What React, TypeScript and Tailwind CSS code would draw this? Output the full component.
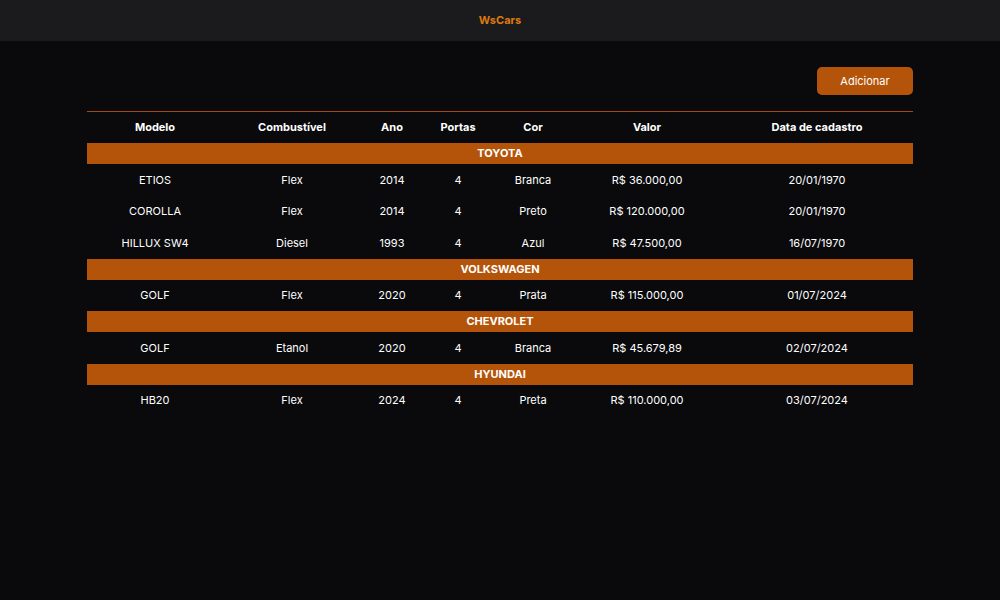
const cols = [
  { label: "Modelo", w: "w-[136px]" },
  { label: "Combustível", w: "w-[138px]" },
  { label: "Ano", w: "w-[62px]" },
  { label: "Portas", w: "w-[70px]" },
  { label: "Cor", w: "w-[80px]" },
  { label: "Valor", w: "w-[148px]" },
  { label: "Data de cadastro", w: "w-[192px]" },
];

type Car = { modelo: string; comb: string; ano: string; portas: string; cor: string; valor: string; data: string };

const brands: { nome: string; carros: Car[] }[] = [
  {
    nome: "TOYOTA",
    carros: [
      { modelo: "ETIOS", comb: "Flex", ano: "2014", portas: "4", cor: "Branca", valor: "R$ 36.000,00", data: "20/01/1970" },
      { modelo: "COROLLA", comb: "Flex", ano: "2014", portas: "4", cor: "Preto", valor: "R$ 120.000,00", data: "20/01/1970" },
      { modelo: "HILLUX SW4", comb: "Diesel", ano: "1993", portas: "4", cor: "Azul", valor: "R$ 47.500,00", data: "16/07/1970" },
    ],
  },
  {
    nome: "VOLKSWAGEN",
    carros: [
      { modelo: "GOLF", comb: "Flex", ano: "2020", portas: "4", cor: "Prata", valor: "R$ 115.000,00", data: "01/07/2024" },
    ],
  },
  {
    nome: "CHEVROLET",
    carros: [
      { modelo: "GOLF", comb: "Etanol", ano: "2020", portas: "4", cor: "Branca", valor: "R$ 45.679,89", data: "02/07/2024" },
    ],
  },
  {
    nome: "HYUNDAI",
    carros: [
      { modelo: "HB20", comb: "Flex", ano: "2024", portas: "4", cor: "Preta", valor: "R$ 110.000,00", data: "03/07/2024" },
    ],
  },
];

export default function App() {
  return (
    <div className="min-h-[600px] bg-[#0a0a0c] text-white font-['Inter',sans-serif]">
      {/* Header */}
      <header className="h-[41px] bg-[#1b1b1d] flex items-center justify-center">
        <span className="text-[#dc7a10] text-[11px] font-bold">WsCars</span>
      </header>

      <main className="w-[826px] mx-auto pt-[26px]">
        <div className="flex justify-end">
          <button className="w-[96px] h-[28px] rounded-[5px] bg-[#b4540a] text-white text-[11px]">
            Adicionar
          </button>
        </div>

        <table className="mt-[16px] w-full table-fixed border-t border-[#a04c12] text-[11px]">
          <thead>
            <tr className="h-[31.5px]">
              {cols.map((c) => (
                <th key={c.label} className={`${c.w} font-bold text-center`}>
                  {c.label}
                </th>
              ))}
            </tr>
          </thead>
          <tbody>
            {brands.map((b) => (
              <>
                <tr key={b.nome} className="h-[21px] bg-[#b4540a]">
                  <td colSpan={7} className="text-center font-bold">
                    {b.nome}
                  </td>
                </tr>
                {b.carros.map((c, i) => (
                  <tr key={b.nome + i} className="h-[31.5px] text-center">
                    <td>{c.modelo}</td>
                    <td>{c.comb}</td>
                    <td>{c.ano}</td>
                    <td>{c.portas}</td>
                    <td>{c.cor}</td>
                    <td>{c.valor}</td>
                    <td>{c.data}</td>
                  </tr>
                ))}
              </>
            ))}
          </tbody>
        </table>
      </main>
    </div>
  );
}
